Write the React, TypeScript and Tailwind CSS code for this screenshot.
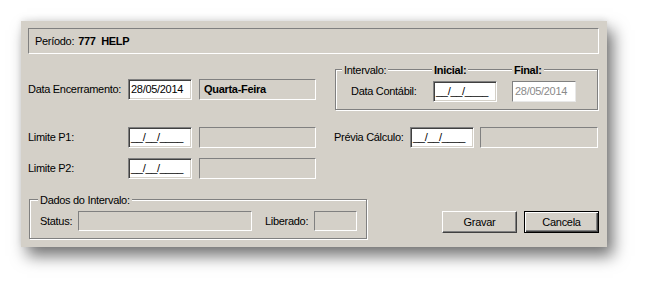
const font = "font-['Liberation_Sans',Arial,sans-serif] text-[11px] tracking-[-0.3px] text-black";

const Edit = ({ w, value, h = "h-[21px]" }: { w: string; value?: string; h?: string }) => (
  <div
    className={`${w} ${h} bg-white border border-t-[#808080] border-l-[#808080] border-r-white border-b-white shadow-[inset_1px_1px_0_#404040,inset_-1px_-1px_0_#d4d0c8] flex items-center pl-[2px] leading-none`}
  >
    {value ?? "__/__/____"}
  </div>
);

const Static = ({ w, h = "h-[21px]", children }: { w: string; h?: string; children?: React.ReactNode }) => (
  <div
    className={`${w} ${h} border border-t-[#808080] border-l-[#808080] border-r-white border-b-white flex items-center pl-[4px]`}
  >
    {children}
  </div>
);

const App = () => {
  return (
    <div className={`w-[649px] h-[289px] bg-white pt-[21px] pl-[21px] ${font}`}>
      <div className="w-[586px] h-[226px] bg-[#d4d0c8] px-[7px] pt-[7px] flex flex-col shadow-[6px_9px_15px_rgba(0,0,0,0.55),0_-2px_6px_rgba(0,0,0,0.08)]">
        {/* Período */}
        <div className="w-[571px] h-[26px] border border-t-[#808080] border-l-[#808080] border-r-white border-b-white flex items-center pl-[6px] gap-[4px]">
          <span>Período:</span>
          <span className="font-bold whitespace-pre">777  HELP</span>
        </div>

        {/* linha 1 */}
        <div className="flex mt-[15px] h-[41px]">
          <div className="flex items-center mt-[10px] h-[21px]">
            <span className="w-[100px]">Data Encerramento:</span>
            <Edit w="w-[64px]" value="28/05/2014" />
            <div className="ml-[7px]">
              <Static w="w-[117px]">
                <span className="font-bold">Quarta-Feira</span>
              </Static>
            </div>
          </div>
          <div className="relative ml-[19px] w-[263px] h-[41px] border border-[#808080] shadow-[inset_1px_1px_0_#fff,1px_1px_0_#fff]">
            <span className="absolute left-[6px] -top-[8px] bg-[#d4d0c8] px-[2px]">Intervalo:</span>
            <span className="absolute left-[96px] -top-[8px] bg-[#d4d0c8] px-[2px] font-bold">Inicial:</span>
            <span className="absolute left-[176px] -top-[8px] bg-[#d4d0c8] px-[2px] font-bold">Final:</span>
            <div className="flex items-center mt-[11px] ml-[15px]">
              <span className="w-[82px]">Data Contábil:</span>
              <Edit w="w-[64px]" />
              <div className="ml-[15px] w-[64px] h-[21px] bg-white border border-t-[#808080] border-l-[#808080] border-r-[#e8e8e8] border-b-[#e8e8e8] flex items-center pl-[2px] text-[#8a8a8a]">
                28/05/2014
              </div>
            </div>
          </div>
        </div>

        {/* linha 2 */}
        <div className="flex items-center mt-[17px] h-[21px]">
          <span className="w-[100px]">Limite P1:</span>
          <Edit w="w-[64px]" />
          <div className="ml-[7px]">
            <Static w="w-[117px]" />
          </div>
          <span className="ml-[18px] w-[76px]">Prévia Cálculo:</span>
          <Edit w="w-[64px]" />
          <div className="ml-[6px]">
            <Static w="w-[118px]" />
          </div>
        </div>

        {/* linha 3 */}
        <div className="flex items-center mt-[10px] h-[21px]">
          <span className="w-[100px]">Limite P2:</span>
          <Edit w="w-[64px]" />
          <div className="ml-[7px]">
            <Static w="w-[117px]" />
          </div>
        </div>

        {/* linha 4 */}
        <div className="flex mt-[20px]">
          <div className="relative ml-[1px] w-[338px] h-[40px] border border-[#808080] shadow-[inset_1px_1px_0_#fff,1px_1px_0_#fff]">
            <span className="absolute left-[8px] -top-[8px] bg-[#d4d0c8] px-[2px]">Dados do Intervalo:</span>
            <div className="flex items-center mt-[11px] ml-[10px]">
              <span className="w-[38px]">Status:</span>
              <Static w="w-[174px]" h="h-[20px]" />
              <span className="ml-[13px] w-[49px]">Liberado:</span>
              <Static w="w-[43px]" h="h-[20px]" />
            </div>
          </div>
          <div className="flex gap-[7px] ml-[75px] mt-[12px]">
            <button className="w-[75px] h-[22px] border border-t-white border-l-white border-r-[#404040] border-b-[#404040] shadow-[inset_-1px_-1px_0_#808080] flex items-center justify-center">
              Gravar
            </button>
            <button className="w-[75px] h-[22px] border border-black shadow-[inset_1px_1px_0_#fff,inset_-1px_-1px_0_#404040,inset_-2px_-2px_0_#808080] flex items-center justify-center">
              Cancela
            </button>
          </div>
        </div>
      </div>
    </div>
  );
};

export default App;
